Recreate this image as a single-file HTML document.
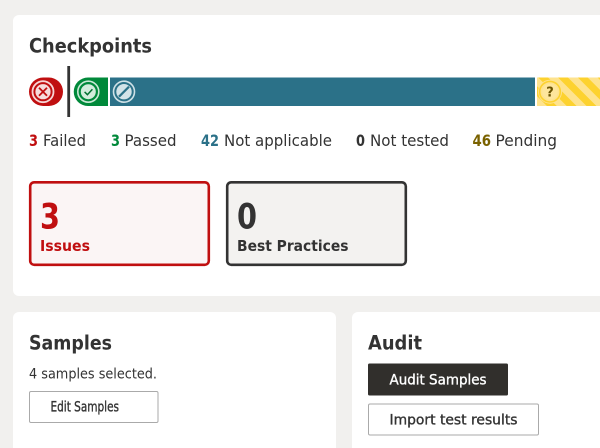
<!DOCTYPE html>
<html><head><meta charset="utf-8"><style>
html,body{margin:0;padding:0;width:600px;height:448px;overflow:hidden;background:#f1f0ee}
svg{display:block;position:absolute;left:0;top:0;overflow:hidden}
text{font-family:"DejaVu Sans","Liberation Sans",sans-serif;fill:#333}
.b{font-weight:700}
.m{stroke:#333;stroke-width:.35}
</style></head><body>
<svg width="600" height="448" viewBox="0 0 600 448" xmlns="http://www.w3.org/2000/svg">
<defs>
<pattern id="st" patternUnits="userSpaceOnUse" width="14" height="14" patternTransform="translate(558 77.5) rotate(-45)">
<rect width="14" height="14" fill="#fee38f"/><rect width="7" height="14" fill="#fdd22f"/>
</pattern>
</defs>
<path d="M19 15H600V296H19a6 6 0 0 1-6-6V21a6 6 0 0 1 6-6z" fill="#fff"/>
<path d="M19 312H330a6 6 0 0 1 6 6V448H13V318a6 6 0 0 1 6-6z" fill="#fff"/>
<path d="M358 312H600V448H352V318a6 6 0 0 1 6-6z" fill="#fff"/>

<text class="b" x="29" y="52.500" font-size="19.500" textLength="123" lengthAdjust="spacingAndGlyphs">Checkpoints</text>

<!-- bar -->
<rect x="29" y="77.500" width="34" height="28.500" rx="14.200" fill="#c00f10"/>
<circle cx="43" cy="91.700" r="10.500" fill="none" stroke="#f7d6d6" stroke-width="1.800"/>
<circle cx="43" cy="91.700" r="7.600" fill="#f6dcdc"/>
<path d="M39 87.700l8 8M47 87.700l-8 8" stroke="#c00f10" stroke-width="1.800" fill="none"/>
<rect x="67.300" y="66" width="2.800" height="51" fill="#333"/>
<path d="M88 77.500h20v28.500H88a14.200 14.200 0 0 1 0-28.500z" fill="#00893a"/>
<circle cx="88.300" cy="91.700" r="10.500" fill="none" stroke="#c9e8d5" stroke-width="1.600"/>
<circle cx="88.300" cy="91.700" r="7.500" fill="#d3ecdc"/>
<path d="M84.600 91.900l2.800 2.800 5-5.400" stroke="#00702f" stroke-width="1.500" fill="none"/>
<rect x="110" y="77.500" width="425" height="28.500" fill="#2b7188"/>
<circle cx="124" cy="91.700" r="10.500" fill="none" stroke="#cfe1e7" stroke-width="1.600"/>
<circle cx="124" cy="91.700" r="7.700" fill="#d3e3e8"/>
<path d="M119 96.700l10-10" stroke="#2b7188" stroke-width="2.200" fill="none"/>
<rect x="537" y="77.500" width="63" height="28.500" fill="url(#st)"/>
<circle cx="550" cy="91.700" r="12" fill="#fee38f"/>
<circle cx="550" cy="91.700" r="10.300" fill="none" stroke="#fdd22f" stroke-width="1.600"/>
<circle cx="550" cy="91.700" r="7.800" fill="#fee69c"/>
<text class="b" x="550" y="96.500" font-size="13" text-anchor="middle" style="fill:#6b5300">?</text>

<!-- legend -->
<text font-size="16" y="146" x="29" class="b" style="fill:#c00f10" textLength="9" lengthAdjust="spacingAndGlyphs">3</text>
<text font-size="16" y="146" x="43" textLength="43" lengthAdjust="spacingAndGlyphs">Failed</text>
<text font-size="16" y="146" x="111" class="b" style="fill:#00893a" textLength="9" lengthAdjust="spacingAndGlyphs">3</text>
<text font-size="16" y="146" x="124.500" textLength="52" lengthAdjust="spacingAndGlyphs">Passed</text>
<text font-size="16" y="146" x="201" class="b" style="fill:#2b7188" textLength="18" lengthAdjust="spacingAndGlyphs">42</text>
<text font-size="16" y="146" x="224" textLength="108" lengthAdjust="spacingAndGlyphs">Not applicable</text>
<text font-size="16" y="146" x="356" class="b" textLength="9" lengthAdjust="spacingAndGlyphs">0</text>
<text font-size="16" y="146" x="370" textLength="79" lengthAdjust="spacingAndGlyphs">Not tested</text>
<text font-size="16" y="146" x="472.500" class="b" style="fill:#7a6200" textLength="18.500" lengthAdjust="spacingAndGlyphs">46</text>
<text font-size="16" y="146" x="495.500" textLength="61.500" lengthAdjust="spacingAndGlyphs">Pending</text>

<!-- stat boxes -->
<rect x="30.200" y="182.300" width="178.600" height="82.500" rx="4" fill="#fbf5f5" stroke="#c00f10" stroke-width="2.600"/>
<text class="b" x="40" y="228.500" font-size="35" style="fill:#c00f10" textLength="20" lengthAdjust="spacingAndGlyphs">3</text>
<text class="b" x="40" y="251" font-size="15.500" style="fill:#c00f10" textLength="50" lengthAdjust="spacingAndGlyphs">Issues</text>
<rect x="227.200" y="182.300" width="178.600" height="82.500" rx="4" fill="#f3f2f0" stroke="#333" stroke-width="2.600"/>
<text class="b" x="237" y="228.500" font-size="35" textLength="20" lengthAdjust="spacingAndGlyphs">0</text>
<text class="b" x="237" y="251" font-size="15.500" textLength="111.500" lengthAdjust="spacingAndGlyphs">Best Practices</text>

<!-- samples -->
<text class="b" x="29" y="349.500" font-size="19.500" textLength="83" lengthAdjust="spacingAndGlyphs">Samples</text>
<text x="29" y="378.500" font-size="14" textLength="128" lengthAdjust="spacingAndGlyphs">4 samples selected.</text>
<rect x="29.500" y="391.500" width="128.500" height="31" rx="1.500" fill="#fff" stroke="#aaa"/>
<text class="m" x="50.500" y="411.500" font-size="14" textLength="68.500" lengthAdjust="spacingAndGlyphs">Edit Samples</text>

<!-- audit -->
<text class="b" x="368" y="349.500" font-size="19.500" textLength="54" lengthAdjust="spacingAndGlyphs">Audit</text>
<rect x="368" y="363.500" width="140" height="32" rx="1.500" fill="#312f2c"/>
<text x="389.500" y="384.500" font-size="14" style="fill:#fff;stroke:#fff;stroke-width:.35" textLength="97" lengthAdjust="spacingAndGlyphs">Audit Samples</text>
<rect x="368.500" y="404" width="170" height="31" rx="1.500" fill="#fff" stroke="#aaa"/>
<text class="m" x="389.500" y="424.500" font-size="14" textLength="128" lengthAdjust="spacingAndGlyphs">Import test results</text>
</svg>
</body></html>
